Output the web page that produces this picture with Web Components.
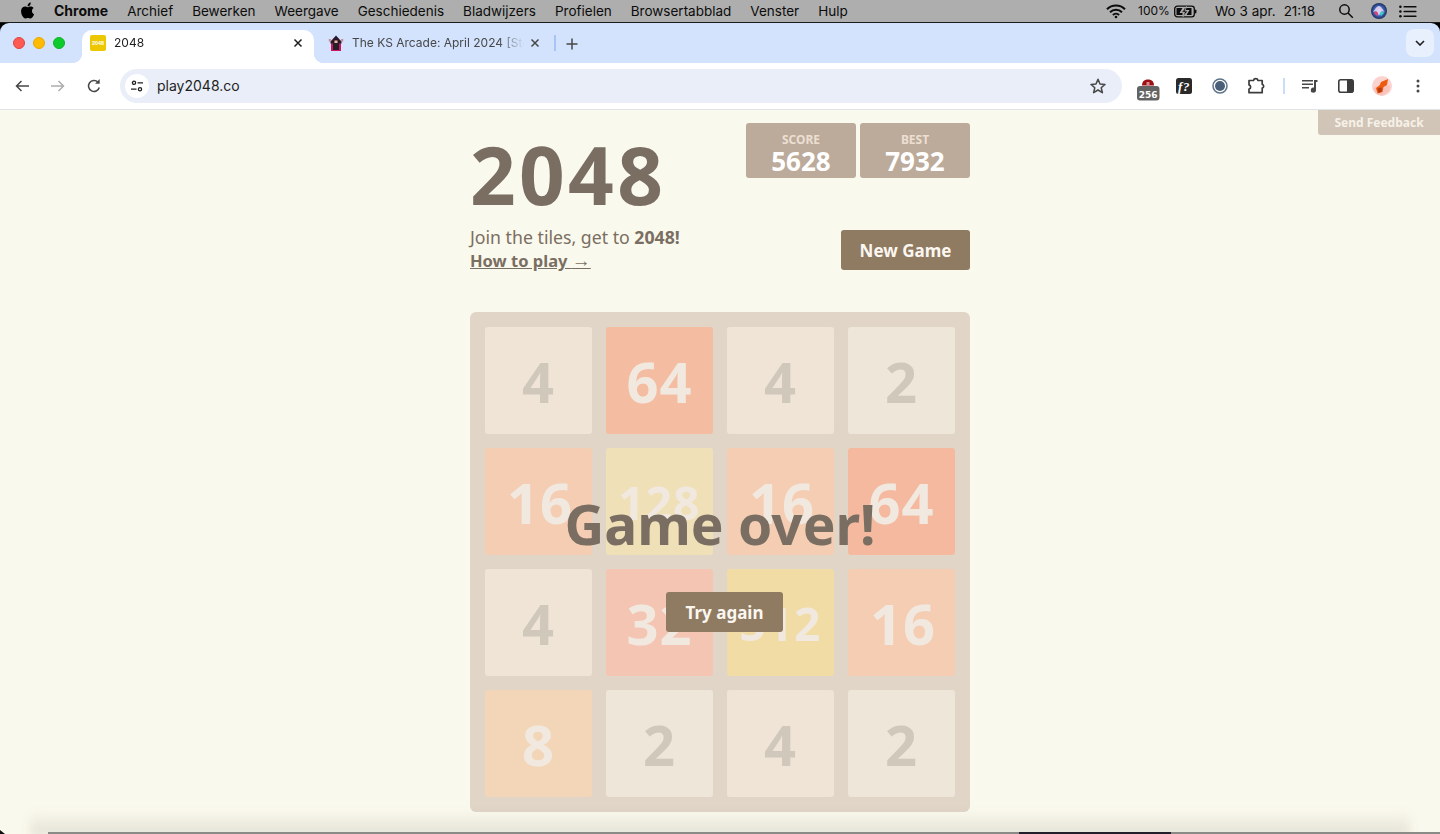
<!DOCTYPE html>
<html lang="nl"><head><meta charset="utf-8"><title>2048</title>
<style>
html,body{margin:0;height:834px;overflow:hidden;background:#000}
body{display:flex;flex-direction:column;width:1440px;font-family:"Inter","Liberation Sans",sans-serif;position:relative}
</style></head><body>
<mac-menubar></mac-menubar>
<chrome-tabs></chrome-tabs>
<chrome-toolbar></chrome-toolbar>
<game-page></game-page>
<window-edge></window-edge>
<script>
const def=(name,html,init)=>customElements.define(name,class extends HTMLElement{
  constructor(){super();this.attachShadow({mode:'open'}).innerHTML=typeof html==='function'?html(this):html;}
  connectedCallback(){ if(init) init(this); }
});

def('mac-menubar',`<style>
:host{display:flex;flex:none;height:23px;box-sizing:border-box;background:#aeaeae;border-bottom:1px solid #1c1c1c;align-items:center;padding-left:21px;color:#0c0c0c;font:400 13.500px/22px Inter,sans-serif}
.apple{width:14px;height:17px;margin-right:19px;margin-top:-2px}
nav{display:flex;gap:19px}
b{font-weight:700;font-size:14px}
.r{margin-left:auto;display:flex;align-items:center;height:22px}
.pct{font-size:12px;margin-left:12px;width:30px;white-space:nowrap}
.date{margin-left:18px;width:123px;box-sizing:border-box;display:flex;gap:8px;white-space:nowrap}
</style>
<svg class="apple" viewBox="3 1 18 21.6"><path d="M17.05 12.54c-.03-2.6 2.12-3.85 2.22-3.91-1.21-1.77-3.09-2.01-3.76-2.04-1.6-.16-3.12.94-3.93.94-.81 0-2.06-.92-3.39-.89-1.74.03-3.35 1.01-4.25 2.57-1.81 3.14-.46 7.8 1.3 10.35.86 1.25 1.89 2.65 3.24 2.6 1.3-.05 1.79-.84 3.36-.84 1.57 0 2.01.84 3.39.81 1.4-.02 2.29-1.27 3.14-2.53.99-1.45 1.4-2.86 1.42-2.93-.03-.01-2.72-1.04-2.75-4.13zM14.47 4.9c.72-.87 1.2-2.08 1.07-3.28-1.03.04-2.28.69-3.02 1.55-.66.77-1.24 2-1.09 3.18 1.15.09 2.33-.58 3.04-1.45z"/></svg>
<nav><b>Chrome</b><span>Archief</span><span>Bewerken</span><span>Weergave</span><span>Geschiedenis</span><span>Bladwijzers</span><span>Profielen</span><span>Browsertabblad</span><span>Venster</span><span>Hulp</span></nav>
<div class="r">
<svg width="20" height="15" viewBox="0 0 20 15" fill="none" stroke="#0c0c0c" stroke-width="2"><path d="M1 5.2a12.6 12.6 0 0 1 18 0M4 8.2a8.5 8.5 0 0 1 12 0M6.900 11a4.400 4.400 0 0 1 6.200 0"/><circle cx="10" cy="13" r="1.300" fill="#0c0c0c" stroke="none"/></svg>
<span class="pct">100%</span>
<svg style="margin-left:6px" width="23" height="13" viewBox="0 0 23 13"><rect x=".7" y="1.200" width="19.600" height="10.600" rx="2.600" fill="none" stroke="#0c0c0c" stroke-width="1.300"/><rect x="21" y="4.600" width="1.400" height="3.800" rx=".7" fill="#0c0c0c"/><path d="M2.500 3h6l-3 5h3v2H2.500z M10 3h7.500v7h-5l3-5h-3l-2 2z" fill="#0c0c0c"/><path d="M12.500 1.500 7.500 7.200h3l-1.500 4.500 5-5.700h-3z" fill="#0c0c0c" stroke="#aeaeae" stroke-width=".8"/></svg>
<span class="date"><span>Wo 3 apr.</span><span>21:18</span></span>
<svg width="16" height="16" viewBox="0 0 16 16" fill="none" stroke="#0c0c0c" stroke-width="1.500"><circle cx="6.500" cy="6.500" r="4.700"/><path d="M10 10l4.800 4.800"/></svg>
<svg style="margin-left:17px" width="16" height="16" viewBox="0 0 16 16"><defs><radialGradient id="si" cx=".5" cy=".5" r=".6"><stop offset="0" stop-color="#c9b8e8"/><stop offset=".5" stop-color="#3a63b8"/><stop offset="1" stop-color="#15152a"/></radialGradient></defs><circle cx="8" cy="8" r="8" fill="url(#si)"/><path d="M2 9C5 5 6 3 8 3c2 0 3 3 6 6-3-1-4-2-6 4C6 7 5 8 2 9z" fill="#e7d6f0" opacity=".85"/><path d="M3 10c2-2 3-2 4 1l-1 2z" fill="#e0407a"/><path d="M13 10c-2-2-3-2-4 1l1 2z" fill="#39d0c8"/></svg>
<svg style="margin:0 23px 0 12px" width="18" height="13" viewBox="0 0 18 13" fill="#0c0c0c"><circle cx="1.400" cy="1.700" r="1.300"/><circle cx="1.400" cy="6.500" r="1.300"/><circle cx="1.400" cy="11.300" r="1.300"/><rect x="4.500" y="1" width="13" height="1.500" rx=".5"/><rect x="4.500" y="5.700" width="13" height="1.500" rx=".5"/><rect x="4.500" y="10.500" width="13" height="1.500" rx=".5"/></svg>
</div>`);

def('chrome-tab',h=>`<style>
:host{display:flex;box-sizing:border-box;height:33px;align-items:center;position:relative;font:400 12px Inter,sans-serif;color:#1f1f1f;flex:none;padding:0 11px 7px 8px}
:host([active]){background:#fff;border-radius:10px 10px 0 0}
:host([active])::before,:host([active])::after{content:"";position:absolute;bottom:0;width:10px;height:10px}
:host([active])::before{left:-10px;background:radial-gradient(circle at 0 0,#d3e3fd 10px,#fff 10.500px)}
:host([active])::after{right:-10px;background:radial-gradient(circle at 100% 0,#d3e3fd 10px,#fff 10.500px)}
:host(:not([active])){color:#474747;padding:0 14px 7px 14px}
.ic{width:16px;height:16px;flex:none;display:flex}
.t{margin-left:8px;flex:1;white-space:nowrap;overflow:hidden;line-height:15px;margin-top:-2px;-webkit-mask-image:linear-gradient(90deg,#000 85%,transparent)}
svg.x{flex:none;margin-left:6px}
</style><span class="ic"><slot></slot></span><span class="t">${h.getAttribute('label')}</span>
<svg class="x" width="10" height="10" viewBox="0 0 10 10" stroke="currentColor" stroke-width="1.500"><path d="M1.500 1.500l7 7M8.500 1.500l-7 7"/></svg>`);

def('chrome-tabs',`<style>
:host{display:flex;flex:none;height:40px;background:#d3e3fd;align-items:flex-end;border-radius:9px 9px 0 0;position:relative}
.tl{display:flex;gap:8px;align-self:flex-start;margin:14px 0 0 13px;width:69px;flex:none;box-sizing:border-box}
.tl i{width:12px;height:12px;border-radius:50%;display:block;box-sizing:border-box}
.fav{width:16px;height:16px;background:#edc800;border-radius:2px;color:#fff;font:700 5.500px/16px "Liberation Sans",sans-serif;text-align:center}
.sep{width:1.500px;height:16px;background:#a9c5f5;margin:0 0 12px 0;flex:none}
.plus{margin:0 0 13px 10px;flex:none}
.dd{margin-left:auto;margin-right:6px;width:28px;height:28px;border-radius:8px;background:#e8f0fe;display:flex;align-items:center;justify-content:center;margin-bottom:6px}
chrome-tab.a{width:232px}
chrome-tab.b{width:240px}
</style>
<div class="tl"><i style="background:#fe5a52;border:.5px solid #e0443e"></i><i style="background:#ffbb00;border:.5px solid #e8a800"></i><i style="background:#0ccb2b;border:.5px solid #0cb428"></i></div>
<chrome-tab class="a" active label="2048"><div class="fav">2048</div></chrome-tab>
<chrome-tab class="b" label="The KS Arcade: April 2024 [Steam]"><svg width="16" height="18" viewBox="0 0 16 18" style="margin-top:-1px"><rect x="3" y="8" width="10" height="9" fill="#d3126a"/><path d="M2.500 7.500 8 1.500l5.500 6v2h-11z" fill="#2b1a2e"/><rect x="5" y="9" width="6" height="7" fill="#222"/><rect x="6.500" y="6.500" width="3" height="2.500" fill="#f2b69a"/><rect x=".8" y="5" width="2" height="2.500" fill="#c88"/><rect x="13.200" y="5" width="2" height="2.500" fill="#c88"/></svg></chrome-tab>
<div class="sep"></div>
<svg class="plus" width="12" height="12" viewBox="0 0 12 12" stroke="#474747" stroke-width="1.500"><path d="M6 .500v11M.500 6h11"/></svg>
<div class="dd"><svg width="10" height="6" viewBox="0 0 10 6" fill="none" stroke="#1f1f1f" stroke-width="1.600"><path d="M1 1l4 4 4-4"/></svg></div>`);

def('chrome-toolbar',`<style>
:host{display:flex;flex:none;height:47px;box-sizing:border-box;background:#fff;border-bottom:1px solid #e1e3e6;align-items:center;padding:0 12px 1px 12px}
.b{width:20px;height:20px;display:flex;align-items:center;justify-content:center;flex:none}
.nav{margin-right:16px}
.omni{flex:none;width:1002px;height:34px;background:#e9eef8;border-radius:17px;display:flex;align-items:center;box-sizing:border-box;padding:0 16px 0 5px;font:400 14px Inter,sans-serif;color:#1f1f1f}
.si{width:24px;height:24px;border-radius:50%;background:#fff;display:flex;align-items:center;justify-content:center;margin-right:8px}
.sp{flex:1}
.ext{display:flex;margin-left:16px;align-items:center}
.ext .b{margin-right:16px}
.ext .b:last-child{margin-right:0}
.div{width:1.500px;height:16px;background:#c9dcf8;margin:0 15.500px 0 0;flex:none}
</style>
<span class="b nav"><svg width="14" height="12" viewBox="0 0 14 12" fill="none" stroke="#474747" stroke-width="1.500"><path d="M14 6H1.500M6.500 1 1.500 6l5 5"/></svg></span>
<span class="b nav"><svg width="14" height="12" viewBox="0 0 14 12" fill="none" stroke="#adadad" stroke-width="1.500"><path d="M0 6h12.500M7.500 1l5 5-5 5"/></svg></span>
<span class="b" style="margin-right:16px"><svg width="14" height="14" viewBox="0 0 14 14" fill="none" stroke="#474747" stroke-width="1.500"><path d="M12.300 8.500A5.500 5.500 0 1 1 11 3.200"/><path d="M12.700 0v4.700H8z" fill="#474747" stroke="none"/></svg></span>
<div class="omni"><span class="si"><svg width="12" height="12" viewBox="0 0 12 12" fill="none" stroke="#1f1f1f" stroke-width="1.300"><circle cx="3" cy="2.800" r="1.600"/><path d="M6.500 2.800H12M0 9.200h5.500"/><circle cx="9" cy="9.200" r="1.600"/></svg></span>play2048.co<span class="sp"></span>
<svg width="16" height="16" viewBox="0 0 16 16" fill="none" stroke="#474747" stroke-width="1.500" stroke-linejoin="round"><path d="M8 1.300 10 6l5 .4-3.800 3.300 1.200 5L8 12l-4.400 2.700 1.200-5L1 6.400 6 6z"/></svg></div>
<div class="ext">
<span class="b"><svg width="24" height="24" viewBox="0 0 24 24" style="flex:none;margin-top:6px"><path d="M6 8.500C6 4 9 2.500 12 2.500s6 1.500 6 6z" fill="#9c0f14"/><rect x="10.500" y="5" width="3" height="3" fill="#d98a8a"/><rect x="1" y="9" width="22.500" height="14.500" rx="3" fill="#636363"/><text x="12.200" y="20.500" text-anchor="middle" font-family="DejaVu Sans,sans-serif" font-weight="700" font-size="9" fill="#fff">256</text></svg></span>
<span class="b"><svg width="16" height="16" viewBox="0 0 16 16"><rect width="16" height="16" rx="2.500" fill="#2a2a2a"/><text x="8" y="12.500" text-anchor="middle" font-family="Liberation Serif,serif" font-style="italic" font-weight="700" font-size="13" letter-spacing=".6" fill="#fff">f?</text></svg></span>
<span class="b"><svg width="16" height="16" viewBox="0 0 16 16"><circle cx="8" cy="8" r="7" fill="#fff" stroke="#5d7388" stroke-width="1.500"/><circle cx="8" cy="8" r="5" fill="#4a6079"/></svg></span>
<span class="b" style="margin-left:1px;margin-right:16px"><svg width="18" height="17" viewBox="0 0 18 17" fill="none" stroke="#3c3c3c" stroke-width="1.700" stroke-linejoin="round" style="flex:none"><path d="M1 3.500h4.500a2.300 2.300 0 0 1 4.500 0h4.200v3.800a1.900 1.900 0 0 1 0 3.700v4.700H1v-3.700a2.100 2.100 0 0 0 0-4.100z"/></svg></span>
<span class="div"></span>
<span class="b"><svg width="16" height="14" viewBox="0 0 16 14" fill="#474747"><rect y="1" width="11" height="1.500"/><rect y="4.500" width="11" height="1.500"/><rect y="8" width="7" height="1.500"/><path d="M12 1h3.500v2H14v8a2.600 2.600 0 1 1-2-2.500z"/></svg></span>
<span class="b"><svg width="16" height="14" viewBox="0 0 16 14"><rect x=".8" y=".8" width="14.400" height="12.400" rx="2" fill="#fff" stroke="#3c3c3c" stroke-width="1.600"/><rect x="9" y="1" width="6" height="12" fill="#3c3c3c"/></svg></span>
<span class="b"><svg width="20" height="20" viewBox="0 0 20 20" style="flex:none"><circle cx="10" cy="10" r="10" fill="#fbd4cf"/><path d="M1 12 9 8l9 2-1 5-7 5-6-2z" fill="#f9b8ae" opacity=".6"/><path d="M16 3 15 9l-3.500 2-1 5L5.500 17.500 4 12l3.500-2.500L9 6z" fill="#ee5a10"/><path d="M5.500 12.500l4-1 .5 4-3.500 1.500z" fill="#b93c10"/></svg></span>
<span class="b"><svg width="4" height="14" viewBox="0 0 4 14" fill="#474747"><circle cx="2" cy="2" r="1.500"/><circle cx="2" cy="7" r="1.500"/><circle cx="2" cy="12" r="1.500"/></svg></span>
</div>`);

def('game-tile',h=>`<style>
:host{display:flex;align-items:center;justify-content:center;background:${h.getAttribute('bg')};color:${h.getAttribute('fg')||'#f1e9e0'};border-radius:3px;font:700 ${h.getAttribute('size')||56}px/107px "Noto Sans",sans-serif;letter-spacing:1px;height:107px;padding:2px 0 0 ${h.getAttribute('pad')||0}px;box-sizing:border-box}
</style><slot></slot>`);

def('score-box',h=>`<style>
:host{display:block;width:110px;height:55px;box-sizing:border-box;background:#bcab9b;border-radius:3px;text-align:center;color:#fff;font-family:"Noto Sans",sans-serif}
.l{font:700 12px/13px "Noto Sans",sans-serif;color:#ecdfd2;padding-top:10px}
.v{font:700 26px/28px "Noto Sans",sans-serif;margin-top:1px}
</style><div class="l">${h.getAttribute('label')}</div><div class="v"><slot></slot></div>`);

def('game-button',`<style>
:host{display:inline-flex;align-items:center;justify-content:center;background:#8f7a62;color:#fbf7f0;border-radius:3px;height:40px;font:700 17px "Noto Sans",sans-serif;box-sizing:border-box}
</style><slot></slot>`);

def('game-board',`<style>
:host{display:grid;position:relative;box-sizing:border-box;width:500px;height:500px;padding:15px;background:#e0d5c6;border-radius:6px;grid-template-columns:repeat(4,107px);grid-auto-rows:107px;gap:14px}
.over{position:absolute;inset:0;display:flex;flex-direction:column;align-items:center}
h2{margin:174px 0 0;font:700 55px/76px "Noto Sans",sans-serif;color:#7a6e62;white-space:nowrap}
game-button{width:117px;margin:30px 0 0 9px}
</style><slot></slot><div class="over"><h2>Game over!</h2><game-button>Try again</game-button></div>`);

def('game-page',`<style>
:host{display:block;flex:1;background:#faf9ed;position:relative;color:#7a6e62;font-family:"Noto Sans",sans-serif;overflow:hidden}
.wrap{width:500px;margin:0 auto;display:flex;flex-direction:column}
.top{display:flex;justify-content:space-between;height:120px}
.left{display:flex;flex-direction:column}
h1{margin:26px 0 0;font:700 80px/75px "Noto Sans",sans-serif;color:#7a6e62;letter-spacing:3.300px}
.scores{display:flex;gap:4px;margin-top:13px}
.intro{display:flex;justify-content:space-between;align-items:flex-start;height:82px}
p{margin:-4px 0 0;font:400 17.700px/23px "Noto Sans",sans-serif}
a{font-weight:700;font-size:16.500px;color:inherit;text-decoration:underline}
a span{font-family:"Liberation Sans",sans-serif;font-weight:400;font-size:19px}
.ng{width:129px}
.fb{position:absolute;top:0;right:0;width:122px;height:25px;background:#d0c5b7;color:#f7f1e7;font:700 12px/26px "Noto Sans",sans-serif;text-align:center;border-radius:0 0 0 3px}
</style>
<div class="wrap">
<div class="top"><div class="left"><h1>2048</h1></div><div class="scores"><score-box label="SCORE">5628</score-box><score-box label="BEST">7932</score-box></div></div>
<div class="intro"><p>Join the tiles, get to <b>2048!</b><br><a>How to play <span>→</span></a></p><game-button class="ng">New Game</game-button></div>
<game-board>
<game-tile bg="#f0e4d6" fg="#d1c8bc">4</game-tile><game-tile bg="#f4bca0">64</game-tile><game-tile bg="#f0e4d6" fg="#d1c8bc">4</game-tile><game-tile bg="#efe6da" fg="#d1c8bc">2</game-tile>
<game-tile bg="#f4cdb3" pad="3">16</game-tile><game-tile bg="#efe0b8" size="46">128</game-tile><game-tile bg="#f4cdb3" pad="3">16</game-tile><game-tile bg="#f4b99f">64</game-tile>
<game-tile bg="#f0e4d6" fg="#d1c8bc">4</game-tile><game-tile bg="#f4c5b3">32</game-tile><game-tile bg="#f0dca4" size="46">512</game-tile><game-tile bg="#f4cdb3" pad="3">16</game-tile>
<game-tile bg="#f3d6b8">8</game-tile><game-tile bg="#efe6da" fg="#d1c8bc">2</game-tile><game-tile bg="#f0e4d6" fg="#d1c8bc">4</game-tile><game-tile bg="#efe6da" fg="#d1c8bc">2</game-tile>
</game-board>
</div>
<div class="fb">Send Feedback</div>`);

def('window-edge',`<style>
:host{position:absolute;left:0;right:0;bottom:0;height:34px;pointer-events:none;display:block;overflow:hidden}
.s{position:absolute;left:30px;right:30px;bottom:-2px;height:26px;background:linear-gradient(180deg,rgba(60,60,40,0),rgba(60,60,40,.13));filter:blur(5px)}
.b{position:absolute;left:48px;right:0;bottom:0;height:2px;background:#8a8a86}
.d{position:absolute;left:1019px;width:152px;bottom:0;height:2px;background:#23202c}
.c{position:absolute;bottom:0;width:5px;height:4px;background:#111;clip-path:polygon(0 0,100% 100%,0 100%)}
</style><div class="s"></div><div class="b"></div><div class="d"></div><div class="c" style="left:0"></div>`);
</script>
</body></html>
